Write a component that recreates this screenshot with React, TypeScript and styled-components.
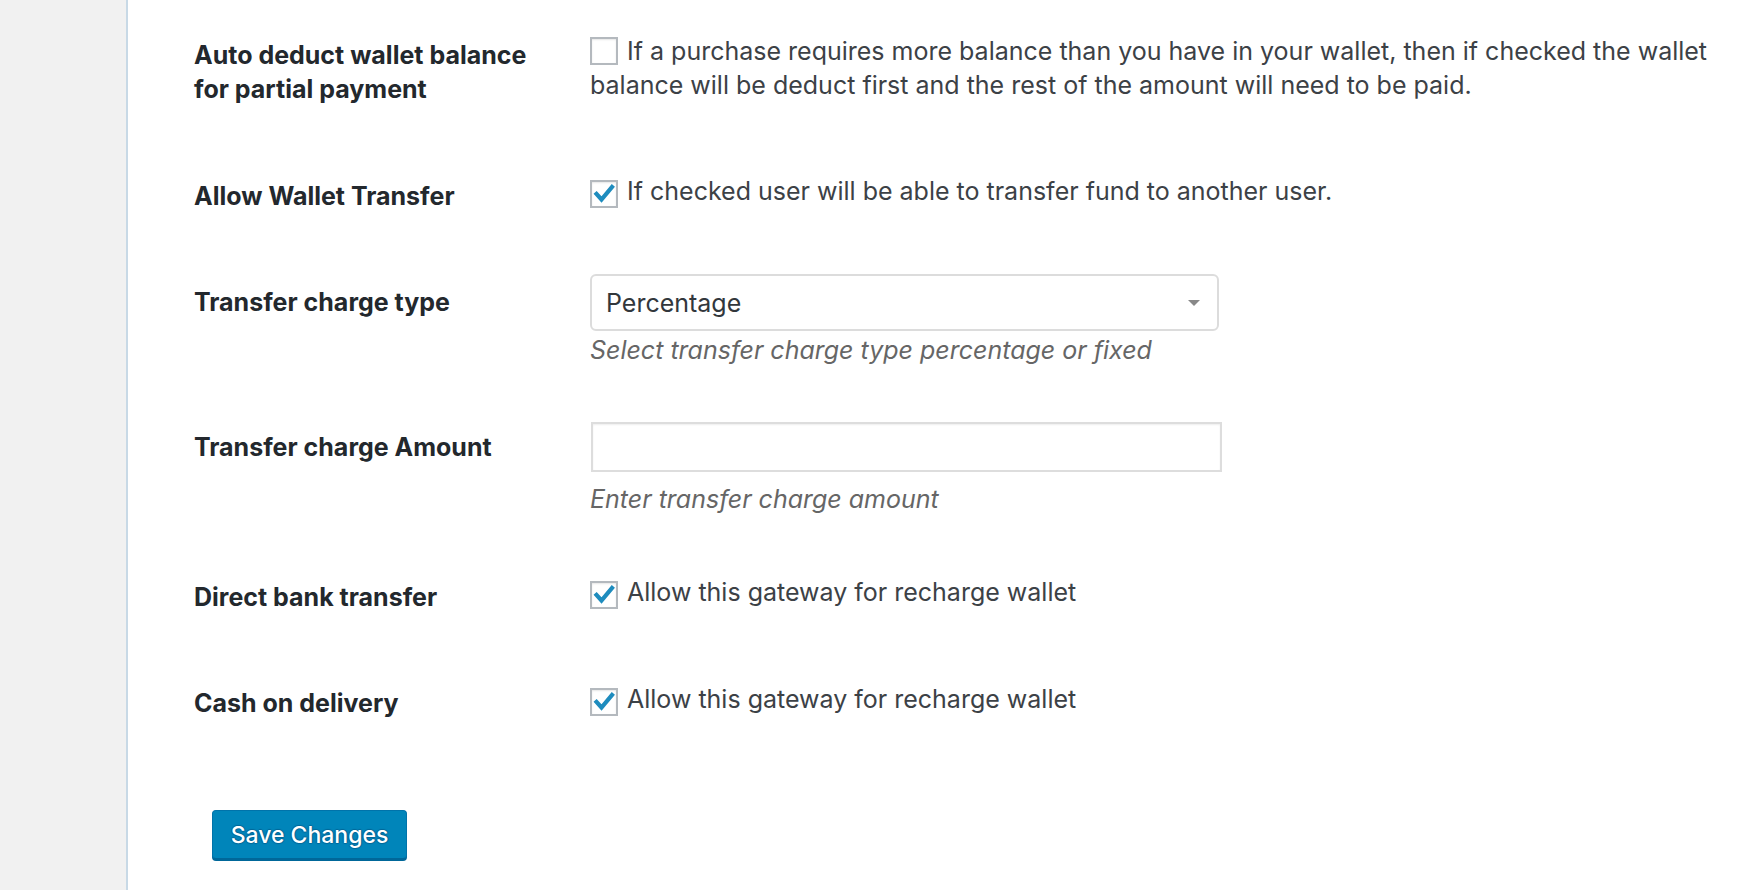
import styled, { createGlobalStyle } from "styled-components";

const GlobalStyle = createGlobalStyle`
  html, body {
    margin: 0;
    padding: 0;
    background: #fff;
  }
  body {
    font-family: Inter, "Liberation Sans", sans-serif;
    font-size: 25px;
    -webkit-font-smoothing: antialiased;
  }
`;

const Page = styled.div`
  display: flex;
  min-height: 890px;
`;

const Sidebar = styled.aside`
  width: 126px;
  flex-shrink: 0;
  background: #f1f1f1;
  border-right: 2px solid #c8d9e6;
`;

const Content = styled.main`
  flex: 1;
  padding-left: 66px;
`;

const Row = styled.div<{ $top: number }>`
  display: grid;
  grid-template-columns: 396px 1fr;
  margin-top: ${(p) => p.$top}px;
`;

const Label = styled.div<{ $offset: number }>`
  padding-top: ${(p) => p.$offset}px;
  font-weight: 650;
  line-height: 34px;
  color: #23282d;
`;

const Field = styled.div`
  max-width: 1125px;
  line-height: 34px;
  color: #3c4146;
`;

const Box = styled.span`
  display: inline-flex;
  align-items: center;
  justify-content: center;
  box-sizing: border-box;
  width: 28px;
  height: 28px;
  margin-right: 9px;
  vertical-align: -5px;
  border: 2px solid #b4b9be;
  background: #fff;
  box-shadow: inset 0 1px 2px rgba(0, 0, 0, 0.1);
`;

const Select = styled.div`
  box-sizing: border-box;
  width: 629px;
  height: 57px;
  display: flex;
  align-items: center;
  justify-content: space-between;
  padding: 0 17px 0 14px;
  border: 2px solid #dcdcdc;
  border-radius: 6px;
  background: #fff;
  color: #32373c;
`;

const Arrow = styled.span`
  width: 0;
  height: 0;
  border-left: 6px solid transparent;
  border-right: 6px solid transparent;
  border-top: 6px solid #888;
`;

const Input = styled.input`
  display: block;
  box-sizing: border-box;
  width: 631px;
  height: 50px;
  margin: 0 0 0 1px;
  border: 2px solid #ddd;
  box-shadow: inset 0 1px 2px rgba(0, 0, 0, 0.07);
  font: inherit;
  outline: none;
`;

const Description = styled.p<{ $gap: number }>`
  margin: ${(p) => p.$gap}px 0 0;
  font-style: italic;
  line-height: 34px;
  color: #666;
`;

const SaveButton = styled.button`
  margin: 90px 0 0 18px;
  box-sizing: border-box;
  width: 195px;
  height: 49px;
  padding: 0;
  border: 1px solid #0073aa;
  border-bottom-color: #006799;
  border-radius: 4px;
  background: #0085ba;
  box-shadow: 0 2px 0 #006799;
  color: #fff;
  font: inherit;
  font-size: 23px;
  font-weight: 500;
  text-shadow: 0 -1px 1px #006799, 1px 0 1px #006799, 0 1px 1px #006799,
    -1px 0 1px #006799;
  cursor: pointer;
`;

const Check = ({ checked }: { checked?: boolean }) => (
  <Box>
    {checked && (
      <svg width="22" height="22" viewBox="0 0 22 22">
        <path
          d="M3.5 11 L8.5 16.5 L19 4"
          fill="none"
          stroke="#1e8cbe"
          strokeWidth="4.2"
          strokeLinecap="square"
          strokeLinejoin="miter"
        />
      </svg>
    )}
  </Box>
);

export default function App() {
  return (
    <>
      <GlobalStyle />
      <Page>
        <Sidebar />
        <Content>
          <Row $top={34}>
            <Label $offset={4}>
              Auto deduct wallet balance
              <br />
              for partial payment
            </Label>
            <Field>
              <Check />
              If a purchase requires more balance than you have in your wallet,
              then if checked the wallet balance will be deduct first and the
              rest of the amount will need to be paid.
            </Field>
          </Row>
          <Row $top={68}>
            <Label $offset={5}>Allow Wallet Transfer</Label>
            <Field>
              <Check checked />
              If checked user will be able to transfer fund to another user.
            </Field>
          </Row>
          <Row $top={61}>
            <Label $offset={11}>Transfer charge type</Label>
            <Field>
              <Select>
                Percentage
                <Arrow />
              </Select>
              <Description $gap={2}>
                Select transfer charge type percentage or fixed
              </Description>
            </Field>
          </Row>
          <Row $top={55}>
            <Label $offset={8}>Transfer charge Amount</Label>
            <Field>
              <Input type="text" />
              <Description $gap={10}>Enter transfer charge amount</Description>
            </Field>
          </Row>
          <Row $top={59}>
            <Label $offset={5}>Direct bank transfer</Label>
            <Field>
              <Check checked />
              Allow this gateway for recharge wallet
            </Field>
          </Row>
          <Row $top={68}>
            <Label $offset={4}>Cash on delivery</Label>
            <Field>
              <Check checked />
              Allow this gateway for recharge wallet
            </Field>
          </Row>
          <SaveButton type="button">Save Changes</SaveButton>
        </Content>
      </Page>
    </>
  );
}
